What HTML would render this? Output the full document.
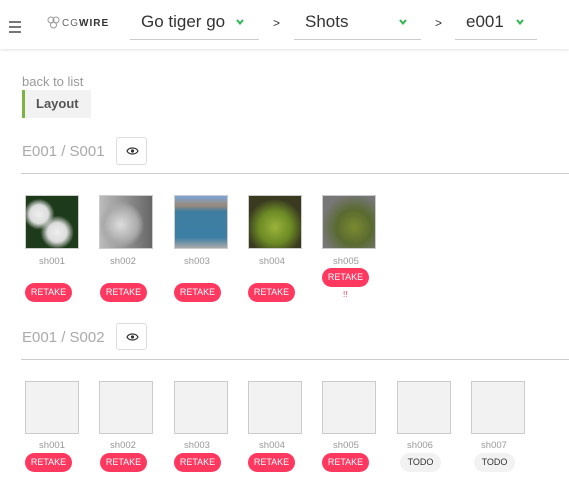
<!DOCTYPE html>
<html><head><meta charset="utf-8"><style>
*{box-sizing:border-box;margin:0;padding:0}
body{width:569px;height:480px;overflow:hidden;background:#fff;font-family:"Liberation Sans",sans-serif;position:relative}
.hdr{position:absolute;left:0;top:0;width:569px;height:49px;background:#fff;box-shadow:0 1px 3px rgba(0,0,0,.12)}
.abs{position:absolute}
.dd{position:absolute;top:10px;height:30px;border-bottom:1px solid #ccc;font-size:16px;color:#333;padding-left:11px;line-height:24px}
.chev{position:absolute;top:9px}
.gt{position:absolute;top:16px;font-size:12px;color:#333}
.sec{position:absolute;left:22px;font-size:15px;color:#aaa}
.eye{position:absolute;width:31px;height:28px;border:1px solid #ddd;border-radius:3px;background:#fff}
.hr{position:absolute;left:21px;right:0;height:1px;background:#ccc}
.th{position:absolute;width:54px;height:54px;border:1px solid #ccc}
.th2{position:absolute;width:54px;height:53px;border:1px solid #ccc;background:#f2f2f2}
.lbl{position:absolute;font-size:9.5px;color:#999;width:74px;text-align:center}
.b{position:absolute;height:19px;border-radius:10px;font-size:9px;line-height:19px;text-align:center;color:#fff;background:#ff3860;width:47px}
.todo{background:#f2f2f2;color:#333;width:41px}
</style></head><body>
<div class="hdr">
 <div class="abs" style="left:9px;top:21px;width:12px;height:2px;background:#777;box-shadow:0 5px 0 #777,0 10px 0 #777"></div>
 <svg class="abs" style="left:47px;top:16px" width="14" height="13" viewBox="0 0 14 13"><g fill="none" stroke="#999" stroke-width="1"><circle cx="4" cy="4" r="3"/><circle cx="9" cy="4" r="3"/><circle cx="6.5" cy="9" r="3"/></g></svg>
 <div class="abs" style="left:62px;top:18px;font-size:10px;letter-spacing:1px;color:#333"><span style="color:#666">CG</span><b>WIRE</b></div>
 <div class="dd" style="left:130px;width:129px;font-size:17px">Go tiger go<svg class="chev" style="left:106px" width="8" height="6" viewBox="0 0 8 6"><path d="M1 1L4 4.5L7 1" fill="none" stroke="#2db84d" stroke-width="2"/></svg></div>
 <div class="gt" style="left:273px">&gt;</div>
 <div class="dd" style="left:294px;width:127px;font-size:17px">Shots<svg class="chev" style="left:105px" width="8" height="6" viewBox="0 0 8 6"><path d="M1 1L4 4.5L7 1" fill="none" stroke="#2db84d" stroke-width="2"/></svg></div>
 <div class="gt" style="left:435px">&gt;</div>
 <div class="dd" style="left:455px;width:82px;font-size:17px">e001<svg class="chev" style="left:61px" width="8" height="6" viewBox="0 0 8 6"><path d="M1 1L4 4.5L7 1" fill="none" stroke="#2db84d" stroke-width="2"/></svg></div>
</div>
<div class="abs" style="left:22px;top:74px;font-size:13px;color:#999">back to list</div>
<div class="abs" style="left:22px;top:90px;width:69px;height:28px;background:#f2f2f2;border-left:3px solid #7cb342;font-size:13px;font-weight:bold;color:#555;line-height:28px;padding-left:11px">Layout</div>

<div class="sec" style="top:143px">E001 / S001</div>
<div class="eye" style="left:116px;top:137px"><svg style="position:absolute;left:9px;top:8px" width="13" height="10" viewBox="0 0 13 10"><path d="M1 5C3 1 10 1 12 5C10 9 3 9 1 5Z" fill="none" stroke="#333" stroke-width="1.2"/><circle cx="6.5" cy="5" r="1.6" fill="#333"/></svg></div>
<div class="hr" style="top:173px"></div>

<div class="th" style="left:25px;top:195px;background:radial-gradient(circle at 60% 70%,#eee 0,#ddd 20%,transparent 35%),radial-gradient(circle at 25% 35%,#eee 0,#ddd 18%,transparent 30%),#1d3a1a"></div>
<div class="th" style="left:99px;top:195px;background:radial-gradient(circle at 40% 55%,#ddd 0,#aaa 40%,transparent 55%),linear-gradient(90deg,#bbb,#666)"></div>
<div class="th" style="left:174px;top:195px;background:linear-gradient(#7aa4d8 0,#9a8a7a 18%,#3e7da0 30%,#3d7fa5 80%,#aaa 100%)"></div>
<div class="th" style="left:248px;top:195px;background:radial-gradient(circle at 50% 60%,#9ab33a 0,#6c8a25 40%,#3a3a20 70%),#333"></div>
<div class="th" style="left:322px;top:195px;background:radial-gradient(circle at 60% 60%,#7a8a30 0,#5a6a30 40%,#777 75%)"></div>
<div class="lbl" style="left:15px;top:256px">sh001</div>
<div class="lbl" style="left:86px;top:256px">sh002</div>
<div class="lbl" style="left:160px;top:256px">sh003</div>
<div class="lbl" style="left:235px;top:256px">sh004</div>
<div class="lbl" style="left:309px;top:256px">sh005</div>
<div class="b" style="left:25px;top:283px">RETAKE</div>
<div class="b" style="left:100px;top:283px">RETAKE</div>
<div class="b" style="left:174px;top:283px">RETAKE</div>
<div class="b" style="left:248px;top:283px">RETAKE</div>
<div class="b" style="left:322px;top:268px">RETAKE</div>
<div class="abs" style="left:343px;top:290px;font-size:8px;color:#ff3860">!!</div>

<div class="sec" style="top:329px">E001 / S002</div>
<div class="eye" style="left:116px;top:323px;width:31px;height:27px"><svg style="position:absolute;left:9px;top:8px" width="13" height="10" viewBox="0 0 13 10"><path d="M1 5C3 1 10 1 12 5C10 9 3 9 1 5Z" fill="none" stroke="#333" stroke-width="1.2"/><circle cx="6.5" cy="5" r="1.6" fill="#333"/></svg></div>
<div class="hr" style="top:359px"></div>

<div class="th2" style="left:25px;top:381px"></div>
<div class="th2" style="left:99px;top:381px"></div>
<div class="th2" style="left:174px;top:381px"></div>
<div class="th2" style="left:248px;top:381px"></div>
<div class="th2" style="left:322px;top:381px"></div>
<div class="th2" style="left:397px;top:381px"></div>
<div class="th2" style="left:471px;top:381px"></div>
<div class="lbl" style="left:15px;top:440px">sh001</div>
<div class="lbl" style="left:86px;top:440px">sh002</div>
<div class="lbl" style="left:160px;top:440px">sh003</div>
<div class="lbl" style="left:235px;top:440px">sh004</div>
<div class="lbl" style="left:309px;top:440px">sh005</div>
<div class="lbl" style="left:383px;top:440px">sh006</div>
<div class="lbl" style="left:457px;top:440px">sh007</div>
<div class="b" style="left:25px;top:453px">RETAKE</div>
<div class="b" style="left:100px;top:453px">RETAKE</div>
<div class="b" style="left:174px;top:453px">RETAKE</div>
<div class="b" style="left:248px;top:453px">RETAKE</div>
<div class="b" style="left:322px;top:453px">RETAKE</div>
<div class="b todo" style="left:400px;top:453px">TODO</div>
<div class="b todo" style="left:474px;top:453px">TODO</div>
</body></html>
